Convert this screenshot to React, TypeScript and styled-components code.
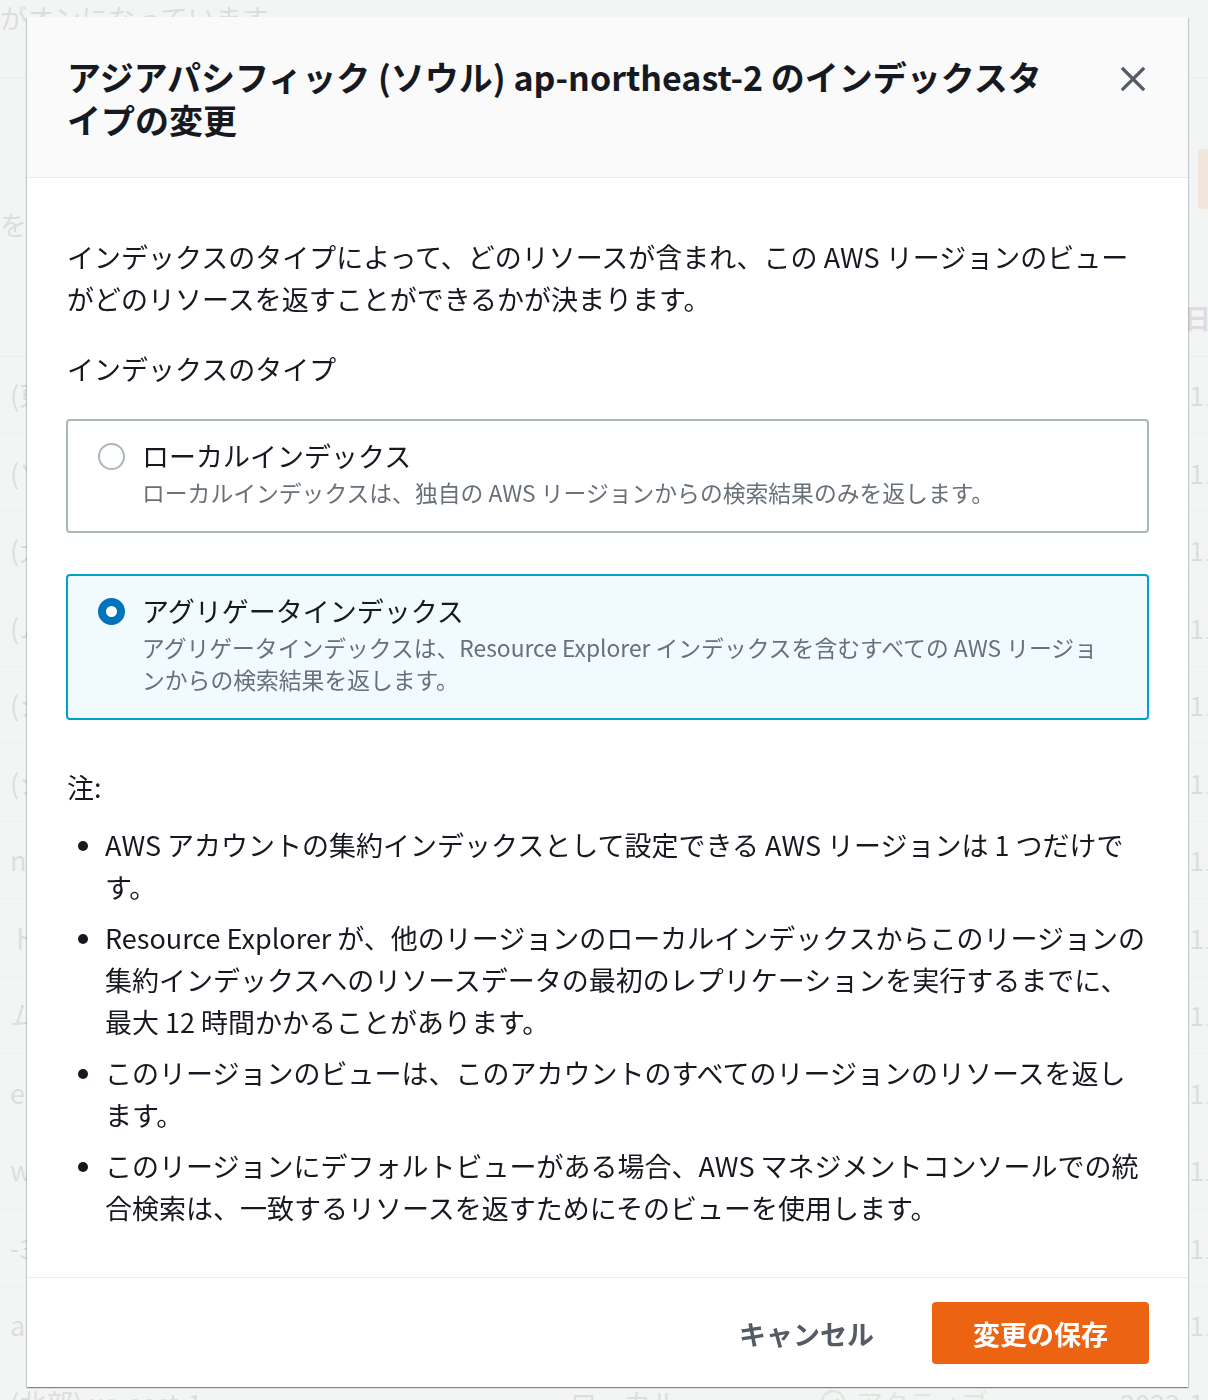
import React from 'react'
import styled, { createGlobalStyle } from 'styled-components'

const GlobalStyle = createGlobalStyle`
  html, body {
    margin: 0;
    padding: 0;
    overflow: hidden;
  }
  body {
    font-family: "Noto Sans CJK JP", "Noto Sans", sans-serif;
    color: #16191f;
    background: #ffffff;
  }
`

/* ---------- page behind the modal ---------- */

const BgPage = styled.div`
  width: 1500px;
  height: 1400px;
  font-size: 27px;
  color: #16191f;
`

const BgNotice = styled.div`
  height: 77px;
  line-height: 36px;
  border-bottom: 1px solid #aab7b8;
`

const BgToolbar = styled.div`
  display: grid;
  grid-template-columns: 1198px 220px;
  height: 201px;
`

const BgHint = styled.div`
  padding-top: 126px;
  line-height: 42px;
`

const BgButton = styled.div`
  margin-top: 71px;
  height: 60px;
  border-radius: 4px;
  background: #ec7211;
`

const BgRow = styled.div<{ $header?: boolean }>`
  display: grid;
  grid-template-columns: 560px 250px 300px 1fr;
  align-items: center;
  height: 76.5px;
  padding-left: ${p => (p.$header ? '40px' : '10px')};
  border-bottom: 1px solid ${p => (p.$header ? '#aab7b8' : '#d5dbdb')};
  font-weight: ${p => (p.$header ? 700 : 400)};
  white-space: nowrap;
`

const BgHeaderDate = styled.span`
  margin-left: -20px;
`

const BgStatus = styled.span`
  display: inline-flex;
  align-items: center;
  gap: 10px;
  color: #1d8102;
`

const regions = [
  '(東京) ap-northeast-1',
  '(ソウル) ap-northeast-2',
  '(大阪) ap-northeast-3',
  '(ムンバイ) ap-south-1',
  '(シンガポール) ap-southeast-1',
  '(シドニー) ap-southeast-2',
  'ntral-1',
  'ト) eu-central-1',
  'ム) eu-north-1',
  'eu-west-1',
  'west-2',
  '-3',
  'a-east-1',
  '(北部) us-east-1',
]

/* ---------- modal ---------- */

const Overlay = styled.div`
  position: fixed;
  inset: 0;
  padding: 17px 0 0 27px;
  background: rgba(242, 243, 243, 0.9);
`

const Modal = styled.div`
  width: 1161px;
  background: #ffffff;
  box-shadow: 0 1px 1px 0 rgba(0, 28, 36, 0.3), 1px 1px 1px 0 rgba(0, 28, 36, 0.15),
    -1px 1px 1px 0 rgba(0, 28, 36, 0.15);
`

const Header = styled.div`
  display: flex;
  align-items: flex-start;
  gap: 40px;
  padding: 38px 35px 36px 40px;
  background: #fafafa;
  border-bottom: 1px solid #eaeded;
`

const Title = styled.h2`
  flex: 1;
  margin: 0;
  font-size: 34px;
  line-height: 43px;
  font-weight: 700;
  color: #16191f;
`

const CloseButton = styled.button`
  display: flex;
  align-items: center;
  justify-content: center;
  width: 40px;
  height: 40px;
  margin-top: 4px;
  padding: 0;
  border: 0;
  background: none;
  color: #545b64;
  cursor: pointer;
`

const Body = styled.div`
  padding: 58px 39px 48px 40px;
  font-size: 27px;
  line-height: 42px;
  color: #16191f;
`

const Intro = styled.p`
  margin: 0 0 28px;
`

const FieldLabel = styled.div`
  margin-bottom: 29px;
`

const Tiles = styled.div`
  display: flex;
  flex-direction: column;
  gap: 41px;
  margin-left: -1px;
`

const Tile = styled.label<{ $selected?: boolean }>`
  display: flex;
  align-items: flex-start;
  padding: 14px 40px 22px 30px;
  border: 2px solid ${p => (p.$selected ? '#00a1c9' : '#aab7b8')};
  border-radius: 4px;
  background: ${p => (p.$selected ? '#f1faff' : '#ffffff')};
  cursor: pointer;
`

const Radio = styled.span<{ $checked?: boolean }>`
  flex: none;
  box-sizing: border-box;
  width: 27px;
  height: 27px;
  margin: 8px 17px 0 0;
  border-radius: 50%;
  background: #ffffff;
  border: ${p => (p.$checked ? '8px solid #0073bb' : '2px solid #aab7b8')};
`

const TileText = styled.div`
  flex: 1;
`

const TileTitle = styled.div`
  font-size: 27px;
  line-height: 42px;
`

const TileDesc = styled.div`
  font-size: 22.8px;
  line-height: 32px;
  color: #687078;
`

const NoteLabel = styled.div`
  margin-top: 46px;
`

const Notes = styled.ul`
  display: flex;
  flex-direction: column;
  gap: 9px;
  margin: 16px 0 0;
  padding-left: 38px;
  list-style: disc;
`

const Footer = styled.div`
  display: flex;
  justify-content: flex-end;
  align-items: center;
  gap: 20px;
  padding: 24px 39px 23px;
  border-top: 1px solid #eaeded;
`

const Button = styled.button<{ $primary?: boolean }>`
  height: 62px;
  padding: 0 ${p => (p.$primary ? '41px' : '38px')};
  border: 0;
  border-radius: 4px;
  background: ${p => (p.$primary ? '#ec6312' : 'transparent')};
  color: ${p => (p.$primary ? '#ffffff' : '#545b64')};
  font-family: inherit;
  font-size: 27px;
  font-weight: 700;
  cursor: pointer;
`

const CloseIcon = () => (
  <svg width="26" height="26" viewBox="0 0 26 26" fill="none">
    <path d="M3 3 L23 23 M23 3 L3 23" stroke="currentColor" strokeWidth="3.2" strokeLinecap="square" />
  </svg>
)

const CheckCircle = () => (
  <svg width="26" height="26" viewBox="0 0 26 26" fill="none">
    <circle cx="13" cy="13" r="11" stroke="currentColor" strokeWidth="2.4" />
    <path d="M7.5 13.5 L11.5 17 L18.5 9.5" stroke="currentColor" strokeWidth="2.4" />
  </svg>
)

const App: React.FC = () => (
  <>
    <GlobalStyle />
    <BgPage>
      <BgNotice>がオンになっています。</BgNotice>
      <BgToolbar>
        <BgHint>を指定します。</BgHint>
        <BgButton />
      </BgToolbar>
      <BgRow $header>
        <span>リージョン</span>
        <span>タイプ</span>
        <span>ステータス</span>
        <BgHeaderDate>作成日</BgHeaderDate>
      </BgRow>
      {regions.map(r => (
        <BgRow key={r}>
          <span>{r}</span>
          <span>ローカル</span>
          <BgStatus>
            <CheckCircle />
            アクティブ
          </BgStatus>
          <span>2022-11-08</span>
        </BgRow>
      ))}
    </BgPage>

    <Overlay>
      <Modal role="dialog">
        <Header>
          <Title>アジアパシフィック (ソウル) ap-northeast-2 のインデックスタイプの変更</Title>
          <CloseButton aria-label="閉じる">
            <CloseIcon />
          </CloseButton>
        </Header>

        <Body>
          <Intro>
            インデックスのタイプによって、どのリソースが含まれ、この AWS
            リージョンのビューがどのリソースを返すことができるかが決まります。
          </Intro>
          <FieldLabel>インデックスのタイプ</FieldLabel>
          <Tiles>
            <Tile>
              <Radio />
              <TileText>
                <TileTitle>ローカルインデックス</TileTitle>
                <TileDesc>ローカルインデックスは、独自の AWS リージョンからの検索結果のみを返します。</TileDesc>
              </TileText>
            </Tile>
            <Tile $selected>
              <Radio $checked />
              <TileText>
                <TileTitle>アグリゲータインデックス</TileTitle>
                <TileDesc>
                  アグリゲータインデックスは、Resource Explorer インデックスを含むすべての AWS
                  リージョンからの検索結果を返します。
                </TileDesc>
              </TileText>
            </Tile>
          </Tiles>

          <NoteLabel>注:</NoteLabel>
          <Notes>
            <li>AWS アカウントの集約インデックスとして設定できる AWS リージョンは 1 つだけです。</li>
            <li>
              Resource Explorer
              が、他のリージョンのローカルインデックスからこのリージョンの集約インデックスへのリソースデータの最初のレプリケーションを実行するまでに、最大
              12 時間かかることがあります。
            </li>
            <li>このリージョンのビューは、このアカウントのすべてのリージョンのリソースを返します。</li>
            <li>
              このリージョンにデフォルトビューがある場合、AWS
              マネジメントコンソールでの統合検索は、一致するリソースを返すためにそのビューを使用します。
            </li>
          </Notes>
        </Body>

        <Footer>
          <Button>キャンセル</Button>
          <Button $primary>変更の保存</Button>
        </Footer>
      </Modal>
    </Overlay>
  </>
)

export default App
